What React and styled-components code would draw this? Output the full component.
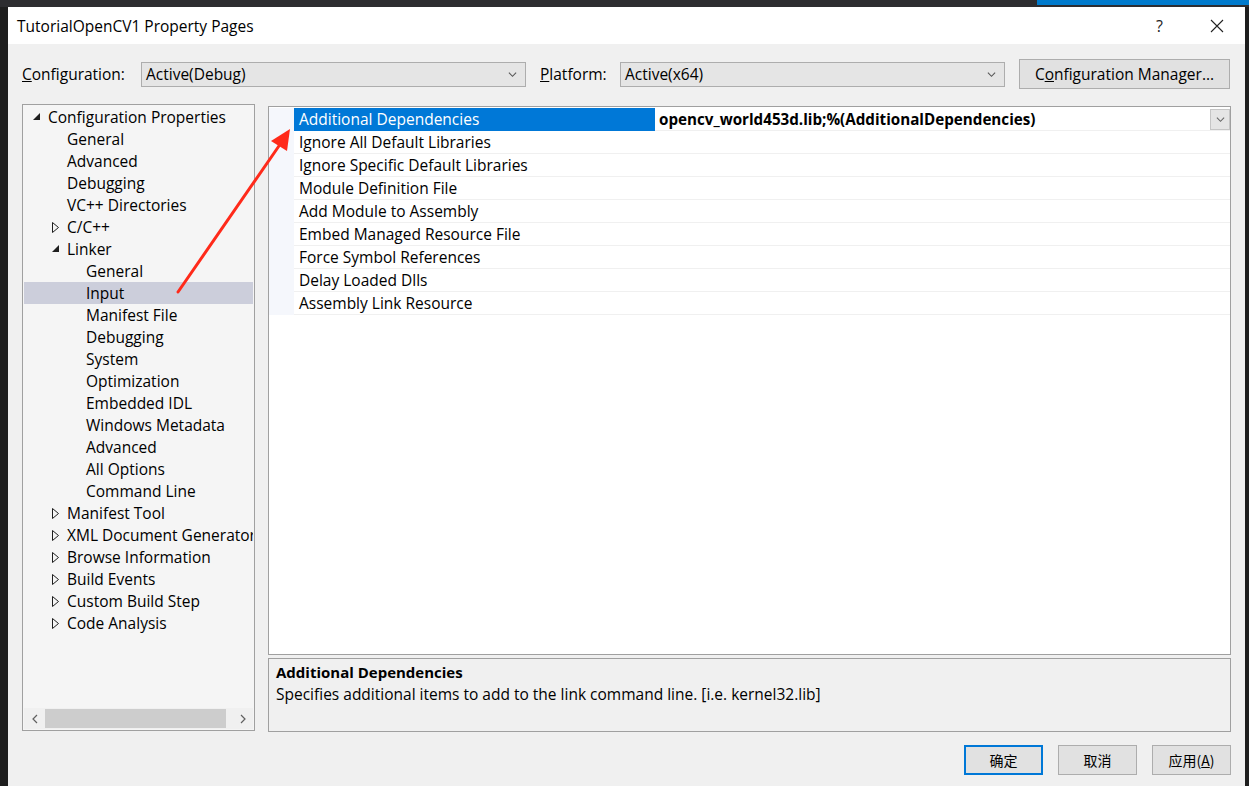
import React from 'react';
import styled, { createGlobalStyle } from 'styled-components';

const GlobalStyle = createGlobalStyle`
  html, body {
    margin: 0;
    padding: 0;
    background: #1e1e1e;
    overflow: hidden;
  }
  body {
    font-family: "Open Sans", "Noto Sans", "Noto Sans CJK SC", sans-serif;
  }
`;

const Desktop = styled.div`
  position: relative;
  width: 1249px;
  height: 786px;
  background: #1e1e1e;
  overflow: hidden;
`;

const TopStrip = styled.div`
  display: flex;
  height: 7px;
  background: #2d2d30;
`;

const TopAccent = styled.div`
  margin-left: auto;
  width: 212px;
  height: 5px;
  background: #007acc;
`;

const Window = styled.div`
  display: flex;
  flex-direction: column;
  margin-left: 8px;
  width: 1237px;
  height: 779px;
  background: #f0f0f0;
  color: #000;
`;

const TitleBar = styled.div`
  display: flex;
  align-items: center;
  height: 37px;
  background: #fff;
  padding-left: 9px;
  font-size: 15.5px;
`;

const TitleText = styled.div`
  flex: 1;
`;

const TitleButton = styled.div`
  width: 57px;
  display: flex;
  justify-content: center;
  align-items: center;
  font-size: 16px;
  color: #222;
`;

const Body = styled.div`
  display: flex;
  flex-direction: column;
  padding: 15px 14px 0 14px;
  flex: 1;
  font-size: 15.5px;
`;

const ConfigRow = styled.div`
  display: flex;
  align-items: center;
  height: 30px;
`;

const Label = styled.span`
  width: ${({ w }) => w}px;
  u { text-decoration: underline; }
`;

const Combo = styled.div`
  display: flex;
  align-items: center;
  width: ${({ w }) => w}px;
  height: 25px;
  box-sizing: border-box;
  border: 1px solid #adadad;
  background: #e5e5e5;
  padding: 0 8px 0 4px;
  margin-right: 14px;
  span { flex: 1; }
`;

const Button = styled.div`
  display: flex;
  align-items: center;
  justify-content: center;
  box-sizing: border-box;
  width: ${({ w }) => w}px;
  height: 30px;
  background: #e1e1e1;
  border: ${({ primary }) => (primary ? '2px solid #0078d7' : '1px solid #adadad')};
  font-family: ${({ cjk }) => (cjk ? '"Noto Sans CJK SC", sans-serif' : 'inherit')};
  font-size: ${({ cjk }) => (cjk ? '14px' : '15.5px')};
  u { text-decoration: underline; }
`;

const Main = styled.div`
  display: flex;
  gap: 13px;
  margin-top: 15px;
`;

const TreePanel = styled.div`
  display: flex;
  flex-direction: column;
  width: 233px;
  height: 627px;
  box-sizing: border-box;
  border: 1px solid #a0a0a0;
  background: #f5f5f5;
  padding: 1px;
`;

const TreeList = styled.div`
  flex: 1;
  overflow: hidden;
`;

const TreeItem = styled.div`
  display: flex;
  align-items: center;
  height: 22px;
  padding-left: ${({ level }) => 24 + level * 19}px;
  background: ${({ selected }) => (selected ? '#cccedb' : 'transparent')};
  white-space: nowrap;
  position: relative;
`;

const Expander = styled.span`
  position: absolute;
  left: ${({ level }) => 8 + level * 19}px;
  top: 6px;
  width: 10px;
  height: 10px;
  display: flex;
`;

const HScroll = styled.div`
  display: flex;
  align-items: center;
  height: 21px;
  background: #f0f0f0;
`;

const ScrollArrow = styled.div`
  width: 21px;
  display: flex;
  justify-content: center;
  align-items: center;
`;

const ScrollThumb = styled.div`
  width: 181px;
  height: 19px;
  background: #cdcdcd;
`;

const ScrollTrack = styled.div`
  flex: 1;
`;

const RightCol = styled.div`
  display: flex;
  flex-direction: column;
  gap: 3px;
  flex: 1;
  margin-top: 2px;
`;

const GridPanel = styled.div`
  height: 549px;
  box-sizing: border-box;
  border: 1px solid #a0a0a0;
  background: #fff;
  padding-top: 1px;
`;

const GridRow = styled.div`
  display: grid;
  grid-template-columns: 25px 361px 1fr;
  height: 23px;
`;

const Gutter = styled.div`
  background: #f5f7fc;
`;

const NameCell = styled.div`
  display: flex;
  align-items: center;
  padding-left: 5px;
  background: ${({ selected }) => (selected ? '#0078d7' : '#fff')};
  color: ${({ selected }) => (selected ? '#fff' : '#000')};
  border-bottom: 1px solid ${({ selected }) => (selected ? '#0078d7' : '#f0f0f0')};
  white-space: nowrap;
  overflow: hidden;
`;

const ValueCell = styled.div`
  display: flex;
  align-items: center;
  padding-left: 4px;
  border-bottom: 1px solid #f0f0f0;
  font-weight: 700;
  font-size: 15.2px;
  span { flex: 1; }
`;

const DropButton = styled.div`
  display: flex;
  align-items: center;
  justify-content: center;
  width: 20px;
  height: 21px;
  box-sizing: border-box;
  background: #e5e5e5;
  border: 1px solid #c5c5c5;
`;

const DescPanel = styled.div`
  height: 74px;
  box-sizing: border-box;
  border: 1px solid #a0a0a0;
  padding: 2px 7px;
  font-size: 15.5px;
`;

const DescTitle = styled.div`
  font-weight: 700;
  font-size: 15px;
  line-height: 22px;
`;

const DescText = styled.div`
  line-height: 22px;
`;

const Footer = styled.div`
  display: flex;
  justify-content: flex-end;
  gap: 15px;
  margin-top: 13px;
`;

const Arrow = styled.svg`
  position: absolute;
  left: 0;
  top: 0;
  pointer-events: none;
`;

const Chevron = ({ size = 9, dir = 'down', color = '#555' }) => {
  const paths = {
    down: 'M1 3 L5 7 L9 3',
    left: 'M7 1 L3 5 L7 9',
    right: 'M3 1 L7 5 L3 9',
  };
  return (
    <svg width={size} height={size} viewBox="0 0 10 10">
      <path d={paths[dir]} fill="none" stroke={color} strokeWidth="1.2" />
    </svg>
  );
};

const ExpandIcon = ({ open }) =>
  open ? (
    <svg width="10" height="10" viewBox="0 0 10 10">
      <polygon points="8,1 8,8 1,8" fill="#1e1e1e" />
    </svg>
  ) : (
    <svg width="10" height="11" viewBox="0 0 10 11">
      <polygon points="1.5,0.5 7.5,5.5 1.5,10.5" fill="none" stroke="#1e1e1e" strokeWidth="1" />
    </svg>
  );

const tree = [
  { label: 'Configuration Properties', level: 0, exp: 'open' },
  { label: 'General', level: 1 },
  { label: 'Advanced', level: 1 },
  { label: 'Debugging', level: 1 },
  { label: 'VC++ Directories', level: 1 },
  { label: 'C/C++', level: 1, exp: 'closed' },
  { label: 'Linker', level: 1, exp: 'open' },
  { label: 'General', level: 2 },
  { label: 'Input', level: 2, selected: true },
  { label: 'Manifest File', level: 2 },
  { label: 'Debugging', level: 2 },
  { label: 'System', level: 2 },
  { label: 'Optimization', level: 2 },
  { label: 'Embedded IDL', level: 2 },
  { label: 'Windows Metadata', level: 2 },
  { label: 'Advanced', level: 2 },
  { label: 'All Options', level: 2 },
  { label: 'Command Line', level: 2 },
  { label: 'Manifest Tool', level: 1, exp: 'closed' },
  { label: 'XML Document Generator', level: 1, exp: 'closed' },
  { label: 'Browse Information', level: 1, exp: 'closed' },
  { label: 'Build Events', level: 1, exp: 'closed' },
  { label: 'Custom Build Step', level: 1, exp: 'closed' },
  { label: 'Code Analysis', level: 1, exp: 'closed' },
];

const rows = [
  { name: 'Additional Dependencies', value: 'opencv_world453d.lib;%(AdditionalDependencies)' },
  { name: 'Ignore All Default Libraries' },
  { name: 'Ignore Specific Default Libraries' },
  { name: 'Module Definition File' },
  { name: 'Add Module to Assembly' },
  { name: 'Embed Managed Resource File' },
  { name: 'Force Symbol References' },
  { name: 'Delay Loaded Dlls' },
  { name: 'Assembly Link Resource' },
];

export default function App() {
  return (
    <Desktop>
      <GlobalStyle />
      <TopStrip>
        <TopAccent />
      </TopStrip>
      <Window>
        <TitleBar>
          <TitleText>TutorialOpenCV1 Property Pages</TitleText>
          <TitleButton>?</TitleButton>
          <TitleButton>
            <svg width="14" height="14" viewBox="0 0 14 14">
              <path d="M1 1 L13 13 M13 1 L1 13" stroke="#222" strokeWidth="1.1" />
            </svg>
          </TitleButton>
        </TitleBar>
        <Body>
          <ConfigRow>
            <Label w={119}>
              <u>C</u>onfiguration:
            </Label>
            <Combo w={385}>
              <span>Active(Debug)</span>
              <Chevron />
            </Combo>
            <Label w={80}>
              <u>P</u>latform:
            </Label>
            <Combo w={385}>
              <span>Active(x64)</span>
              <Chevron />
            </Combo>
            <Button w={211}>
              C<u>o</u>nfiguration Manager...
            </Button>
          </ConfigRow>
          <Main>
            <TreePanel>
              <TreeList>
                {tree.map((t, i) => (
                  <TreeItem key={i} level={t.level} selected={t.selected}>
                    {t.exp && (
                      <Expander level={t.level}>
                        <ExpandIcon open={t.exp === 'open'} />
                      </Expander>
                    )}
                    {t.label}
                  </TreeItem>
                ))}
              </TreeList>
              <HScroll>
                <ScrollArrow>
                  <Chevron dir="left" size={10} color="#606060" />
                </ScrollArrow>
                <ScrollThumb />
                <ScrollTrack />
                <ScrollArrow>
                  <Chevron dir="right" size={10} color="#606060" />
                </ScrollArrow>
              </HScroll>
            </TreePanel>
            <RightCol>
              <GridPanel>
                {rows.map((r, i) => (
                  <GridRow key={i}>
                    <Gutter />
                    <NameCell selected={i === 0}>{r.name}</NameCell>
                    <ValueCell>
                      <span>{r.value}</span>
                      {i === 0 && (
                        <DropButton>
                          <Chevron size={9} color="#666" />
                        </DropButton>
                      )}
                    </ValueCell>
                  </GridRow>
                ))}
              </GridPanel>
              <DescPanel>
                <DescTitle>Additional Dependencies</DescTitle>
                <DescText>
                  Specifies additional items to add to the link command line. [i.e. kernel32.lib]
                </DescText>
              </DescPanel>
            </RightCol>
          </Main>
          <Footer>
            <Button w={79} primary cjk>确定</Button>
            <Button w={79} cjk>取消</Button>
            <Button w={79} cjk>
              应用(<u>A</u>)
            </Button>
          </Footer>
        </Body>
      </Window>
      <Arrow width="1249" height="786" viewBox="0 0 1249 786">
        <line x1="178" y1="292" x2="281" y2="143" stroke="#ff2a1a" strokeWidth="3" strokeLinecap="round" />
        <polygon points="290,129 271,141 287,151" fill="#ff2a1a" />
      </Arrow>
    </Desktop>
  );
}
